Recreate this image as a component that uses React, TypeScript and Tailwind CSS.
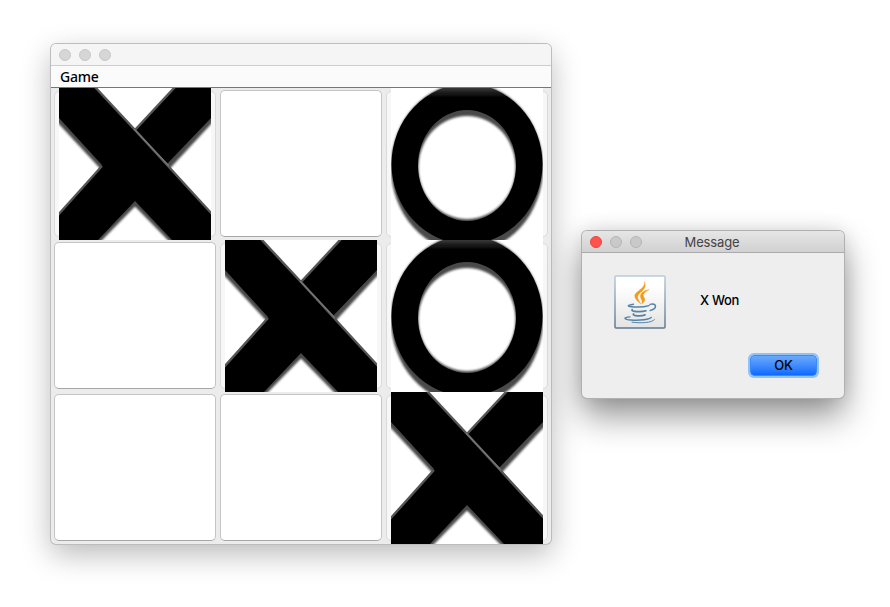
import React from "react";

type Mark = "X" | "O" | null;

const board: Mark[] = ["X", null, "O", null, "X", "O", null, null, "X"];

function XMark() {
  return (
    <svg viewBox="0 0 152 152" className="relative block h-[152px] w-[152px] bg-white">
      <defs>
        <filter id="x-soft" x="-10%" y="-10%" width="120%" height="120%">
          <feGaussianBlur stdDeviation="1.2" />
        </filter>
        <filter id="x-line" x="-10%" y="-10%" width="120%" height="120%">
          <feGaussianBlur stdDeviation="0.5" />
        </filter>
      </defs>
      <path
        d="M-20 -10V14L43 82L-20 148V172H23L76 118L129 172H172V149L109 82L172 14V-10H125L76 43L26 -10Z"
        fill="#484848"
        stroke="#484848"
        strokeWidth="1"
        filter="url(#x-soft)"
      />
      <path d="M0 0H36L76 42L116 0H152V30L108 76L152 125V152H113L76 113L39 152H0V126L43 77L0 30Z" fill="#000" />
      <g fill="none" stroke="#555" filter="url(#x-line)">
        <path d="M35 -2L76 42L153 126M76 42L117 -2M-1 127L43 78" strokeWidth="2.4" />
        <path d="M75 41L110 78" stroke="#777" strokeWidth="1.3" />
      </g>
    </svg>
  );
}

function OMark() {
  return (
    <svg viewBox="0 0 152 152" className="relative block h-[152px] w-[152px] bg-white">
      <defs>
        <filter id="o-soft" x="-10%" y="-10%" width="120%" height="120%">
          <feGaussianBlur stdDeviation="1.2" />
        </filter>
        <filter id="o-edge" x="-10%" y="-10%" width="120%" height="120%">
          <feGaussianBlur stdDeviation="0.6" />
        </filter>
        <linearGradient id="o-top" x1="0" x2="0" y1="0" y2="1">
          <stop offset="0" stopColor="#505050" />
          <stop offset=".085" stopColor="#000" />
        </linearGradient>
      </defs>
      <path
        fillRule="evenodd"
        fill="#484848"
        filter="url(#o-soft)"
        d="M0 79.500a76 84.500 0 1 0 152 0a76 84.500 0 1 0 -152 0M27.500 79.500a48.500 51.500 0 1 0 97 0a48.500 51.500 0 1 0 -97 0"
      />
      <path
        fillRule="evenodd"
        fill="url(#o-top)"
        filter="url(#o-edge)"
        d="M.5 76a75.500 80 0 1 0 151 0a75.500 80 0 1 0 -151 0M27 77.500a49 55.500 0 1 0 98 0a49 55.500 0 1 0 -98 0"
      />
    </svg>
  );
}

function Cell({ mark }: { mark: Mark }) {
  if (!mark) {
    return (
      <div className="h-[152px] w-[166px] pt-[2px] pl-[2px]">
        <div className="h-[147px] w-[162px] rounded-[5px] border border-[#c4c4c4] border-b-[#a6a6a6] bg-white" />
      </div>
    );
  }
  return (
    <div className="grid h-[152px] w-[166px]">
      <div className="col-start-1 row-start-1 mt-[3px] ml-[2px] h-[146px] w-[162px] rounded-[5px] border border-[#dadada] bg-[#f7f7f7]" />
      <div className="col-start-1 row-start-1 pl-[7px]">{mark === "X" ? <XMark /> : <OMark />}</div>
    </div>
  );
}

function Lights({ active = false }: { active?: boolean }) {
  return (
    <div className="flex gap-2">
      <span className={`h-3 w-3 rounded-full border ${active ? "border-[#e2463f] bg-[#ff544d]" : "border-[#c8c8c8] bg-[#d6d6d6]"}`} />
      <span className={`h-3 w-3 rounded-full border ${active ? "border-[#b5b5b5] bg-[#c9c9c9]" : "border-[#c8c8c8] bg-[#d6d6d6]"}`} />
      <span className={`h-3 w-3 rounded-full border ${active ? "border-[#b5b5b5] bg-[#c9c9c9]" : "border-[#c8c8c8] bg-[#d6d6d6]"}`} />
    </div>
  );
}

function JavaIcon() {
  return (
    <svg viewBox="0 0 52 54" className="block h-[54px] w-[52px]">
      <defs>
        <linearGradient id="java-bg" x1="0" x2="0" y1="0" y2="1">
          <stop offset=".2" stopColor="#fff" />
          <stop offset="1" stopColor="#e3e3e3" />
        </linearGradient>
        <linearGradient id="java-border" x1="0" x2="0" y1="0" y2="1">
          <stop offset="0" stopColor="#b9cbdc" />
          <stop offset="1" stopColor="#5c7892" />
        </linearGradient>
      </defs>
      <rect x="1" y="1" width="50" height="52" rx="1" fill="url(#java-bg)" stroke="url(#java-border)" strokeWidth="1.5" />
      <g fill="#f39a13" stroke="#f39a13" strokeWidth=".3">
        <path d="M30.500 6.500C31.500 11 27 14 23.500 16.700C18.500 20.500 20.500 23.500 27 29.200C24.500 25 22.500 22.500 24.500 19.500C27.500 16.500 33.500 13 30.500 6.500Z" />
        <path d="M35.300 14.500C29.500 15.500 26.200 18.500 26.400 21.500C26.700 24 29 25 27.800 29C31.500 26 31.300 24.500 29.800 22C28.400 19.500 30 17.500 35.300 14.500Z" />
      </g>
      <g fill="none" stroke="#5483a7" strokeLinecap="round">
        <path d="M19.500 29.200C12 30.500 13 31.500 20 32C26 32.300 31 31.900 35 30.600" strokeWidth="1.5" />
        <path d="M36 29.400C43 27.500 43.500 33.500 36.200 35.500" strokeWidth="1.500" />
        <path d="M18.200 34.600C16.500 37 28 37 32 35.800" strokeWidth="1.700" />
        <path d="M19.500 38.900C17.800 41.200 27.500 41.300 31 39.900" strokeWidth="1.700" />
        <path d="M16 41.900C8.500 42.500 10 44.500 17 45C26 45.600 36 44.500 37.300 42.400" strokeWidth="1.400" />
        <path d="M18 47.200C27 48.300 38 48 40.500 44.500" strokeWidth="1" />
      </g>
    </svg>
  );
}

export default function App() {
  return (
    <main className="flex h-[607px] w-[890px] items-start overflow-hidden bg-white pl-[51px] text-black">
      <section className="mt-[44px] h-[500px] w-[500px] shrink-0 overflow-hidden rounded-[5px] bg-[#ececec] shadow-[0_0_0_1px_#bdbdbd,0_10px_30px_rgba(0,0,0,0.28)]">
        <div className="flex h-[22px] items-center border-b border-[#cdcdcd] bg-[#f5f5f5] pl-[8px]">
          <Lights />
        </div>
        <div className="flex h-[22px] items-center border-b border-[#777] bg-[#fbfbfb] pl-[9px] font-['Noto_Sans',sans-serif] text-[14px] leading-none font-medium tracking-[-0.2px]">
          <span>Game</span>
        </div>
        <div className="grid grid-cols-[166px_166px_166px] pl-px">
          {board.map((mark, i) => (
            <Cell key={i} mark={mark} />
          ))}
        </div>
      </section>

      <section className="mt-[231px] ml-[31px] h-[167px] w-[262px] shrink-0 overflow-hidden rounded-[5px] bg-[#eee] font-['Inter',sans-serif] shadow-[0_0_0_1px_#b0b0b0,0_18px_34px_rgba(0,0,0,0.42),0_0_20px_rgba(0,0,0,0.12)]">
        <div className="grid h-[22px] grid-cols-[76px_92px_1fr] items-center border-b border-[#aaa] bg-linear-to-b from-[#e6e6e6] to-[#d1d1d1] pl-[8px]">
          <Lights active />
          <span className="pt-[2px] text-center text-[13px] leading-none tracking-[-0.15px] text-[#444]">Message</span>
        </div>
        <div className="flex pt-[22px] pl-[32px]">
          <JavaIcon />
          <span className="mt-[17px] ml-[34px] text-[13px] leading-[16px] font-medium tracking-[-0.3px]">X Won</span>
        </div>
        <div className="flex justify-end pt-[26px] pr-[27px]">
          <button className="h-[21px] w-[67px] rounded-[4px] border border-[#3b8af5] bg-linear-to-b from-[#6aa9fb] to-[#0a69ff] text-[13px] leading-none font-medium tracking-[-0.2px] shadow-[0_0_0_2px_#8fc2f7]">
            OK
          </button>
        </div>
      </section>
    </main>
  );
}
